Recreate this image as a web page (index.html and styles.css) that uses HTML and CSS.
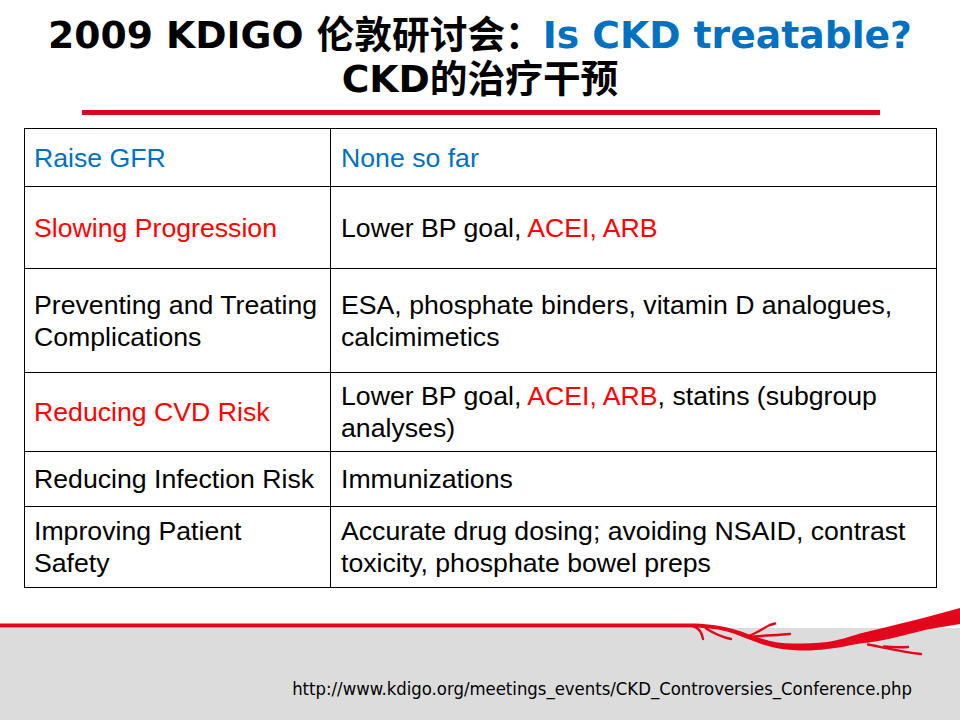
FILE: index.html
```html
<!DOCTYPE html>
<html lang="zh">
<head>
<meta charset="utf-8">
<title>2009 KDIGO 伦敦研讨会</title>
<link rel="stylesheet" href="styles.css">
</head>
<body>
<div class="slide">
  <h1 class="title">2009 KDIGO 伦敦研讨会：<span class="blue">Is CKD treatable?</span><br>CKD的治疗干预</h1>
  <div class="rule"></div>
  <table class="grid">
    <tr class="r1">
      <td class="k blue">Raise GFR</td>
      <td class="v blue">None so far</td>
    </tr>
    <tr class="r2">
      <td class="k red">Slowing Progression</td>
      <td class="v">Lower BP goal, <span class="red">ACEI, ARB</span></td>
    </tr>
    <tr class="r3">
      <td class="k">Preventing and Treating Complications</td>
      <td class="v">ESA, phosphate binders, vitamin D analogues, calcimimetics</td>
    </tr>
    <tr class="r4">
      <td class="k red">Reducing CVD Risk</td>
      <td class="v">Lower BP goal, <span class="red">ACEI, ARB</span>, statins (subgroup analyses)</td>
    </tr>
    <tr class="r5">
      <td class="k">Reducing Infection Risk</td>
      <td class="v">Immunizations</td>
    </tr>
    <tr class="r6">
      <td class="k">Improving Patient<br>Safety</td>
      <td class="v">Accurate drug dosing; avoiding NSAID, contrast toxicity, phosphate bowel preps</td>
    </tr>
  </table>
  <footer class="foot">
    <svg class="swoosh" width="960" height="70" viewBox="0 0 960 70" aria-hidden="true">
      <path class="trunk" d="M0,27.5 L690,27.5 C705,27.5 717,29.5 727,31.5 C740,34.5 750,39 760,42 C772,46 782,47.5 793,47.5 C805,47.5 817,47 827,46 C840,44 850,40.5 860,37.5 L893,29.5 L927,21 L960,12 L960,28 L927,33.5 L893,42 C880,45 870,46.5 860,47.5 C848,49.5 838,52 827,53 C815,54.5 805,55 793,54 C780,53 770,51 760,47.5 C748,43.5 738,38.5 727,35.5 C715,32.5 703,31.5 690,31.5 L0,31.5 Z"/>
      <path class="twig" d="M693,30 C699,32 702,37 703,43"/>
      <path class="twig" d="M706,32.5 C714,37.5 721,41 731,43"/>
      <path class="twig" d="M750,39.5 C759,36 765,31 770,29 L775,27.5"/>
      <path class="twig" d="M754,40.5 C766,39.5 778,39 790,38"/>
      <path class="twig" d="M868,48.5 C886,52 903,56 921,58"/>
      <path class="twig" d="M884,50.5 C893,51.5 900,51.5 908,51"/>
    </svg>
    <div class="band">
      <span class="url">http://www.kdigo.org/meetings_events/CKD_Controversies_Conference.php</span>
    </div>
  </footer>
</div>
</body>
</html>
```
FILE: styles.css
```css
* {
  box-sizing: border-box;
}

html,
body {
  margin: 0;
  padding: 0;
}

body {
  width: 960px;
  height: 720px;
  overflow: hidden;
  background: #ffffff;
}

.slide {
  display: flex;
  flex-direction: column;
  height: 720px;
}

.title {
  margin: 13px 0 0;
  font-family: "DejaVu Sans", "Noto Sans CJK SC", sans-serif;
  font-weight: bold;
  font-size: 37.7px;
  line-height: 44px;
  text-align: center;
  color: #000000;
}

.blue {
  color: #0070c0;
}

.red {
  color: #ff0000;
}

.rule {
  margin: 9px 0 0 82px;
  width: 798px;
  height: 5px;
  background: #e2001a;
}

.grid {
  margin: 13px 0 0 24px;
  width: 913px;
  border-collapse: collapse;
  font-family: "Liberation Sans", Arial, sans-serif;
  font-size: 26.67px;
  line-height: 32px;
  color: #000000;
}

.grid td {
  border: 1px solid #000000;
  padding: 0 9px 0 10px;
  vertical-align: middle;
}

.grid td.k {
  width: 306px;
  padding-left: 9px;
}

.r1 { height: 58px; }
.r2 { height: 82px; }
.r3 { height: 104px; }
.r4 { height: 79px; }
.r5 { height: 55px; }
.r6 { height: 81px; }

.foot {
  position: relative;
  margin-top: auto;
  height: 124px;
}

.swoosh {
  position: absolute;
  top: 0;
  left: 0;
  z-index: 1;
}

.trunk {
  fill: #e3051b;
}

.twig {
  fill: none;
  stroke: #e3051b;
  stroke-width: 2.4;
  stroke-linecap: round;
}

.band {
  margin-top: 32px;
  height: 92px;
  background: #dcdcdc;
  display: flex;
  justify-content: flex-end;
  padding: 50px 48px 0 0;
}

.url {
  font-family: "DejaVu Sans Condensed", "DejaVu Sans", sans-serif;
  font-stretch: condensed;
  font-size: 18.35px;
  line-height: 21px;
  color: #000000;
  white-space: nowrap;
}
```
